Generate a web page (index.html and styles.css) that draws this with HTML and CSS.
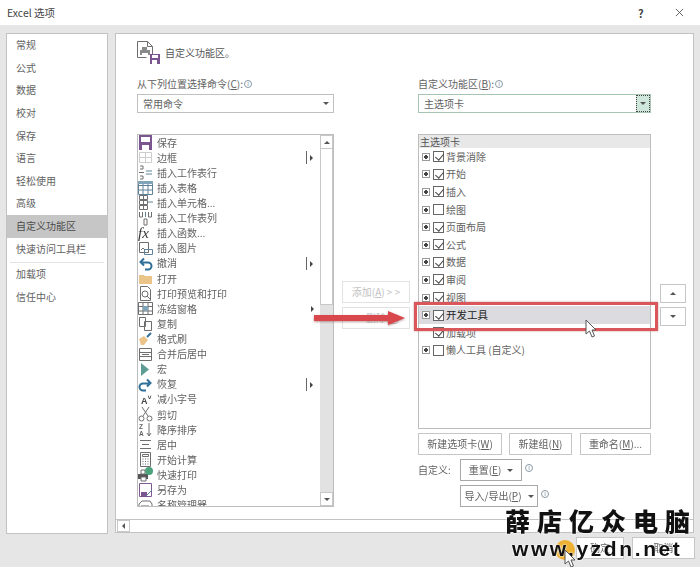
FILE: index.html
```html
<!DOCTYPE html>
<html lang="zh-CN">
<head>
<meta charset="utf-8">
<title>Excel 选项</title>
<link rel="stylesheet" href="styles.css">
</head>
<body>
<div class="dialog">
  <header class="titlebar">
    <span class="title">Excel 选项</span>
    <span class="help">?</span>
    <svg class="close" viewBox="0 0 10 10"><path d="M1 1l8 8M9 1l-8 8"/></svg>
  </header>
  <div class="workspace">
    <nav class="sidebar">
      <div class="nav-item">常规</div>
      <div class="nav-item">公式</div>
      <div class="nav-item">数据</div>
      <div class="nav-item">校对</div>
      <div class="nav-item">保存</div>
      <div class="nav-item">语言</div>
      <div class="nav-item">轻松使用</div>
      <div class="nav-item">高级</div>
      <div class="nav-item selected">自定义功能区</div>
      <div class="nav-item">快速访问工具栏</div>
      <div class="nav-divider"></div>
      <div class="nav-item">加载项</div>
      <div class="nav-item">信任中心</div>
    </nav>
    <main class="panel">
      <div class="panel-body">
        <div class="panel-head">
          <svg class="head-icon" viewBox="0 0 23 23">
            <path class="ln" d="M.5.5h10l5 5v11M.5.5v16h9M10.5.5v5h5"/>
            <path class="fl-grey" d="M5 6h5v3H5zM3 9h10v5H3z"/>
            <path class="fl-white" d="M5 12h6v4H5z"/>
            <path class="fl-purple" d="M13 13h10v10H13z"/>
            <path class="fl-white" d="M15 14h6v3h-6zM15 19h5v4h-5z"/>
          </svg>
          <span class="head-text">自定义功能区。</span>
        </div>
        <div class="columns">
          <section class="col-left">
            <div class="field-label">从下列位置选择命令(<u>C</u>):<span class="info">i</span></div>
            <div class="select"><span class="select-text">常用命令</span><span class="select-arrow"><i class="tri-down"></i></span></div>
            <div class="command-list">
              <div class="commands">
                <div class="cmd"><svg viewBox="0 0 15 15"><path class="fl-purple" d="M1 0h13v15H1z"/><path class="fl-white" d="M3 2h9v5H3zM4 10h7v5H4z"/></svg><span>保存</span></div>
                <div class="cmd"><svg viewBox="0 0 15 15"><path class="ln-soft" d="M1.500 2.500h12v10h-12zM1.500 7.500h12M7.500 2.500v10"/></svg><span>边框</span><i class="split"></i></div>
                <div class="cmd"><svg viewBox="0 0 15 15"><path class="ln" d="M2 1h3v3H2M2 11h3v3H2M1 7.500h5"/><path class="ln-blue" d="M8 6h6M8 9h6"/></svg><span>插入工作表行</span></div>
                <div class="cmd"><svg viewBox="0 0 15 15"><path class="ln-blue" d="M.5 1.500h14v13H.5zM.5 5.500h14M.5 10h14M5 1.500v13M10 1.500v13"/><path class="fl-blue" d="M0 1h15v3H0z"/></svg><span>插入表格</span></div>
                <div class="cmd"><svg viewBox="0 0 15 15"><path class="ln" d="M1.500.5h8v4h-8zM5.500.5v4M1.500 5.500h8v4h-8zM5.500 5.500v4M1.500 10.500h8v4h-8zM5.500 10.500v4"/><path class="ln-blue" d="M10 7h5"/></svg><span>插入单元格...</span></div>
                <div class="cmd"><svg viewBox="0 0 15 15"><path class="ln" d="M1.500 1v5h3V1M10.500 1v5h3V1M6 8h3v6H6z"/><path class="ln-blue" d="M7.500 1v5"/></svg><span>插入工作表列</span></div>
                <div class="cmd"><span class="fx">fx</span><span>插入函数...</span></div>
                <div class="cmd"><svg viewBox="0 0 15 15"><path class="ln" d="M1.500 1.500h9v10h-9z"/><path class="ln-blue" d="M6.500 8.500h8v5h-8z"/><path class="ln" d="M3 9l2-2 2 2"/></svg><span>插入图片</span></div>
                <div class="cmd"><svg viewBox="0 0 15 15"><path class="arc" d="M4 6.500h6a3.500 3.500 0 0 1 0 7H7M6 2.500L2.500 6 6 9.500"/></svg><span>撤消</span><i class="split"></i></div>
                <div class="cmd"><svg viewBox="0 0 15 15"><path class="fl-folder" d="M1 4h5l1 1h7v8H1z"/></svg><span>打开</span></div>
                <div class="cmd"><svg viewBox="0 0 15 15"><path class="ln" d="M2.500.5h7l3 3v11h-10z"/><circle class="ln" cx="7" cy="8" r="3"/><path class="ln" d="M9 10l4 4"/></svg><span>打印预览和打印</span></div>
                <div class="cmd"><svg viewBox="0 0 15 15"><path class="ln" d="M.5 1.500h14v12H.5zM.5 5.500h14M.5 10h14M5 1.500v12M10 1.500v12"/><path class="fl-blue" d="M5 5h5v5H5z"/></svg><span>冻结窗格</span><i class="tri-right solo"></i></div>
                <div class="cmd"><svg viewBox="0 0 15 15"><path class="ln" d="M1.500 1.500h6v9h-6zM6.500 5.500h7v9h-7z"/></svg><span>复制</span></div>
                <div class="cmd"><svg viewBox="0 0 15 15"><path class="fl-folder" d="M1 8l5-3 4 4-4 5H3z"/><path class="arc" d="M9 6l4-4"/></svg><span>格式刷</span></div>
                <div class="cmd"><svg viewBox="0 0 15 15"><path class="ln" d="M1.500 1.500h12v12h-12zM1.500 5.500h12M1.500 9.500h12M4 7.500h7"/></svg><span>合并后居中</span></div>
                <div class="cmd"><svg viewBox="0 0 15 15"><path class="fl-teal" d="M3 1l8 6.500L3 14z"/></svg><span>宏</span></div>
                <div class="cmd"><svg viewBox="0 0 15 15"><path class="arc" d="M11 6.500H5a3.500 3.500 0 0 0 0 7h3M9 2.500L12.500 6 9 9.500"/></svg><span>恢复</span><i class="split"></i></div>
                <div class="cmd"><span class="font-a">A<small>˅</small></span><span>减小字号</span></div>
                <div class="cmd"><svg viewBox="0 0 15 15"><path class="ln" d="M4 0l6 9M11 0L5 9"/><circle class="ln" cx="3.500" cy="11.500" r="2.500"/><circle class="ln" cx="11.500" cy="11.500" r="2.500"/></svg><span>剪切</span></div>
                <div class="cmd"><span class="sort-letters">Z<br>A</span><svg class="sort-arrow" viewBox="0 0 6 15"><path class="ln" d="M3 1v13M1 11l2 3 2-3"/></svg><span>降序排序</span></div>
                <div class="cmd"><svg viewBox="0 0 15 15"><path class="ln" d="M2 3.500h11M4 7.500h7M2 11.500h11"/></svg><span>居中</span></div>
                <div class="cmd"><svg viewBox="0 0 15 15"><path class="ln" d="M2.500.5h10v14h-10zM4.500 2.500h6v2h-6zM4.500 7h1M7 7h1M9.500 7h1M4.500 9.500h1M7 9.500h1M9.500 9.500h1M4.500 12h1M7 12h1M9.500 12h1"/></svg><span>开始计算</span></div>
                <div class="cmd"><svg viewBox="0 0 15 15"><path class="fl-dark" d="M0 7h10v5H0z"/><path class="fl-white" d="M3 10h5v4H3z"/><path class="ln" d="M3 10h5v4H3zM3 3h4v4H3z"/><circle class="fl-green" cx="11" cy="4" r="4"/></svg><span>快速打印</span></div>
                <div class="cmd"><svg viewBox="0 0 15 15"><path class="ln-purple" d="M1.500 .5h12v13h-12z"/><path class="fl-purple" d="M3 9h6v5H3z"/><path class="ln-blue" d="M8 13l6-6"/></svg><span>另存为</span></div>
                <div class="cmd"><svg viewBox="0 0 15 15"><path class="ln" d="M1 6l3-3h8l2 3v7H1zM3 8h8"/></svg><span>名称管理器</span></div>
              </div>
              <div class="vscroll">
                <div class="scroll-btn"><i class="tri-up"></i></div>
                <div class="scroll-thumb"></div>
                <div class="scroll-track"></div>
                <div class="scroll-btn"><i class="tri-down"></i></div>
              </div>
            </div>
          </section>
          <section class="col-mid">
            <div class="btn mid-btn disabled"><span>添加(<u>A</u>) &gt; &gt;</span></div>
            <div class="btn mid-btn disabled"><span>&lt;&lt; 删除(<u>R</u>)</span></div>
          </section>
          <section class="col-right">
            <div class="field-label">自定义功能区(<u>B</u>):<span class="info">i</span></div>
            <div class="select focus"><span class="select-text">主选项卡</span><span class="select-arrow active"><i class="tri-down"></i></span></div>
            <div class="tree">
              <div class="tree-head">主选项卡</div>
              <div class="tree-row"><i class="exp"></i><i class="chk on"></i><span>背景消除</span></div>
              <div class="tree-row"><i class="exp"></i><i class="chk on"></i><span>开始</span></div>
              <div class="tree-row"><i class="exp"></i><i class="chk on"></i><span>插入</span></div>
              <div class="tree-row"><i class="exp"></i><i class="chk"></i><span>绘图</span></div>
              <div class="tree-row"><i class="exp"></i><i class="chk on"></i><span>页面布局</span></div>
              <div class="tree-row"><i class="exp"></i><i class="chk on"></i><span>公式</span></div>
              <div class="tree-row"><i class="exp"></i><i class="chk on"></i><span>数据</span></div>
              <div class="tree-row"><i class="exp"></i><i class="chk on"></i><span>审阅</span></div>
              <div class="tree-row"><i class="exp"></i><i class="chk on"></i><span>视图</span></div>
              <div class="tree-row current"><i class="exp"></i><i class="chk on"></i><span>开发工具</span></div>
              <div class="tree-row"><i class="exp ghost"></i><i class="chk on"></i><span>加载项</span></div>
              <div class="tree-row"><i class="exp"></i><i class="chk"></i><span>懒人工具 (自定义)</span></div>
            </div>
            <div class="tree-actions">
              <div class="btn action w84"><span>新建选项卡(<u>W</u>)</span></div>
              <div class="btn action w63"><span>新建组(<u>N</u>)</span></div>
              <div class="btn action w71"><span>重命名(<u>M</u>)...</span></div>
            </div>
            <div class="custom-row">
              <span class="custom-label">自定义:</span>
              <div class="btn drop w62"><span>重置(<u>E</u>)</span><i class="tri-down"></i></div>
              <span class="info">i</span>
            </div>
            <div class="custom-row second">
              <div class="btn drop w78"><span>导入/导出(<u>P</u>)</span><i class="tri-down"></i></div>
              <span class="info">i</span>
            </div>
          </section>
          <section class="col-far">
            <div class="btn move"><i class="tri-up"></i></div>
            <div class="btn move"><i class="tri-down"></i></div>
          </section>
        </div>
      </div>
      <div class="hscroll">
        <div class="scroll-btn wide"><i class="tri-left"></i></div>
      </div>
    </main>
  </div>
  <footer class="footer">
    <div class="btn foot-btn ok">确定</div>
    <div class="btn foot-btn cancel">取消</div>
  </footer>
</div>

<svg class="red-arrow" viewBox="0 0 92 16"><path d="M0 4h74V0l17 7-17 7v-4H0z"/></svg>
<div class="red-box"></div>
<svg class="cursor cursor-mid" viewBox="0 0 12 19"><path d="M1 1v14l3.500-3 2.500 6 2.500-1-2.500-6H11z"/></svg>
<div class="click-dot"></div>
<svg class="cursor cursor-ok" viewBox="0 0 12 19"><path d="M1 1v14l3.500-3 2.500 6 2.500-1-2.500-6H11z"/></svg>
<div class="watermark">
  <div class="wm-cn">薛店亿众电脑</div>
  <div class="wm-en">www.yzdn.net</div>
</div>
</body>
</html>
```
FILE: styles.css
```css
* { box-sizing: border-box; }
html, body { margin: 0; padding: 0; }
body {
  position: relative;
  width: 700px;
  height: 567px;
  overflow: hidden;
  background: #e6e6e6;
  color: #626262;
  font-family: "Noto Sans CJK SC", "Liberation Sans", sans-serif;
  font-size: 10px;
  line-height: 14px;
}
.dialog { display: flex; flex-direction: column; height: 567px; filter: blur(.35px); }
u { text-underline-offset: 1px; }

.titlebar { display: flex; align-items: center; height: 25px; padding: 0 7px; background: #fff; flex: none; }
.title { flex: 1; font-size: 10.500px; color: #444; }
.help { width: 8px; margin-right: 29px; font-size: 11px; color: #444; font-weight: 700; }
.close { width: 9px; height: 9px; margin-right: 9px; }
.close path { stroke: #555; stroke-width: 1; fill: none; }

.workspace { display: flex; height: 509px; padding: 8px 6px 0; flex: none; }
.sidebar { width: 102px; height: 501px; background: #fff; border: 1px solid #c2c2c2; flex: none; }
.nav-item { height: 22.650px; padding-left: 9px; line-height: 22px; white-space: nowrap; }
.nav-item.selected { background: #c6c6c6; color: #4a4a4a; }
.nav-divider { height: 1px; margin: 2px 3px 0; background: #e2e2e2; }

.panel { display: flex; flex-direction: column; width: 579px; height: 500px; margin-left: 7px; background: #fff; border: 1px solid #c2c2c2; flex: none; }
.panel-body { flex: 1; padding: 7px 0 0 21px; min-height: 0; }
.panel-head { display: flex; align-items: center; height: 23px; }
.head-icon { width: 23px; height: 23px; }
.head-text { margin: 0 0 0 5px; padding-top: 1px; color: #555; }

.columns { display: flex; margin-top: 13px; }
.col-left { width: 197px; flex: none; }
.col-mid { width: 84px; padding: 204px 0 0 8px; flex: none; }
.col-right { width: 233px; flex: none; }
.col-far { width: 35px; padding: 207px 0 0 9px; flex: none; }

.field-label { height: 14px; line-height: 14px; white-space: nowrap; }
.info { display: inline-block; width: 8px; height: 8px; margin-left: 1px; border: 1px solid #8a9aa5; border-radius: 50%; color: #7b8a95; font-size: 6px; line-height: 6px; text-align: center; vertical-align: 2px; }

.select { display: flex; align-items: stretch; height: 19px; margin-top: 3px; background: #fff; border: 1px solid #c0c0c0; }
.select-text { flex: 1; padding-left: 5px; line-height: 17px; }
.select-arrow { display: flex; align-items: center; justify-content: center; width: 14px; }
.select.focus { border-color: #a5c4b4; }
.select-arrow.active { background: #cfe7db; border: 1px dotted #444; }

.tri-down, .tri-up, .tri-right, .tri-left { display: block; width: 0; height: 0; border-style: solid; border-color: transparent; }
.tri-down { border-width: 3px 3px 0; border-top-color: #555; }
.tri-up { border-width: 0 3px 3px; border-bottom-color: #555; }
.tri-right { border-width: 3px 0 3px 3px; border-left-color: #444; }
.tri-left { border-width: 3px 3px 3px 0; border-right-color: #555; }

.command-list { display: flex; height: 373px; margin-top: 21px; background: #fff; border: 1px solid #bdbdbd; }
.commands { flex: 1; min-width: 0; overflow: hidden; }
.cmd { position: relative; display: flex; align-items: center; height: 15.120px; white-space: nowrap; }
.cmd svg { width: 15px; height: 15px; margin-right: 4px; flex: none; }
.fx { width: 19px; font: italic 15px/15px "Liberation Serif", serif; color: #333; }
.font-a { width: 19px; padding-left: 3px; font: 700 9px/15px "Liberation Sans", sans-serif; color: #444; }
.font-a small { font-size: 7px; vertical-align: 4px; }
.sort-letters { width: 8px; padding-left: 1px; font: 700 6.500px/7px "Liberation Sans", sans-serif; color: #666; }
.cmd .sort-arrow { width: 6px; margin-right: 5px; }
.split { position: absolute; left: 168px; top: 1px; width: 8px; height: 13px; border-left: 1px solid #666; }
.split::after { content: ""; position: absolute; left: 3px; top: 4px; border: 3px solid transparent; border-left-color: #444; border-right-width: 0; }
.solo { position: absolute; left: 173px; top: 5px; }

.ln, .ln-soft, .ln-blue, .ln-purple, .arc { fill: none; stroke-width: 1; }
.ln { stroke: #6e6e6e; }
.ln-soft { stroke: #cdcdcd; }
.ln-blue { stroke: #5d8299; }
.ln-purple { stroke: #7d5b92; }
.arc { stroke: #2f6f98; stroke-width: 2; }
.fl-grey { fill: #8a8a8a; }
.fl-white { fill: #fff; }
.fl-purple { fill: #7a5590; }
.fl-blue { fill: #7fa3b8; }
.fl-folder { fill: #eac488; }
.fl-teal { fill: #5f9c96; }
.fl-dark { fill: #555; }
.fl-green { fill: #4aa37b; }

.vscroll { display: flex; flex-direction: column; width: 13px; flex: none; background: #e2e2e2; }
.scroll-btn { display: flex; align-items: center; justify-content: center; width: 13px; height: 14px; background: #fff; border: 1px solid #c8c8c8; flex: none; }
.scroll-btn.wide { height: 100%; }
.scroll-thumb { height: 156px; background: #fff; border: 1px solid #c8c8c8; border-top: 0; flex: none; }
.scroll-track { flex: 1; }

.btn { display: flex; align-items: center; justify-content: center; background: #fff; border: 1px solid #c6c6c6; white-space: nowrap; flex: none; }
.mid-btn { width: 68px; height: 22px; margin-bottom: 4px; }
.disabled { color: #c2c2c2; border-color: #e2e2e2; }
.move { width: 26px; height: 19px; margin-bottom: 4px; }

.tree { height: 295px; margin-top: 21px; background: #fff; border: 1px solid #bdbdbd; overflow: hidden; }
.tree-head { height: 13px; padding-left: 1px; line-height: 13px; background: #e8e8e8; color: #555; }
.tree-row { display: flex; align-items: center; height: 17.600px; padding-left: 3px; }
.tree-row.current { background: #dcdce0; color: #222; font-size: 10.500px; }
.exp { width: 8px; height: 8px; margin-right: 3px; border: 1px solid #9a9a9a; flex: none;
  background: linear-gradient(#444, #444) center / 4px 2px no-repeat, linear-gradient(#444, #444) center / 2px 4px no-repeat, #fff; }
.exp.ghost { visibility: hidden; }
.chk { position: relative; width: 11px; height: 11px; margin-right: 2px; border: 1px solid #666; background: #fff; flex: none; }
.chk.on::after { content: ""; position: absolute; left: 3px; top: 0; width: 4px; height: 7px; border: solid #444; border-width: 0 1px 1px 0; transform: rotate(40deg); }

.tree-actions { display: flex; gap: 7px; margin-top: 4px; }
.action { height: 22px; }
.w84 { width: 84px; }
.w63 { width: 63px; }
.w71 { width: 71px; margin-left: 1px; }
.w62 { width: 62px; }
.w78 { width: 78px; }
.custom-row { display: flex; align-items: flex-start; margin-top: 4px; }
.custom-row.second { padding-left: 42px; }
.custom-label { width: 42px; padding-top: 4px; }
.drop { height: 22px; border: 1px solid #a8a8a8; gap: 6px; }
.custom-row .info { margin: 5px 0 0 3px; }

.hscroll { display: flex; height: 13px; padding-left: 1px; border-top: 1px solid #c2c2c2; flex: none; }

.footer { display: flex; justify-content: flex-end; gap: 8px; padding: 3px 5px 0 0; flex: 1; }
.foot-btn { height: 22px; }
.ok { width: 48px; }
.cancel { width: 63px; }

.red-arrow { position: absolute; left: 314px; top: 311px; width: 92px; height: 16px; filter: drop-shadow(0 1px 1px rgba(120, 60, 60, .5)); }
.red-arrow path { fill: #d9484c; }
.red-box { position: absolute; left: 414px; top: 302px; width: 244px; height: 29px; border: 3px solid #d9575a; box-shadow: 0 0 2px rgba(150, 60, 60, .5); }
.cursor { position: absolute; width: 12px; height: 19px; }
.cursor path { fill: #fff; stroke: #555; stroke-width: 1; }
.cursor-mid { left: 585px; top: 319px; }
.cursor-ok { left: 564px; top: 549px; z-index: 2; }
.click-dot { position: absolute; left: 555px; top: 540px; width: 20px; height: 20px; border-radius: 50%; background: #eeb030; }
.watermark { position: absolute; left: 500px; top: 504px; width: 200px; color: #111; text-shadow: 0 0 2px #fff, 0 0 2px #fff; z-index: 1; }
.wm-cn { height: 33px; padding-left: 5px; font: 900 25px/33px "Noto Sans CJK SC", sans-serif; letter-spacing: 7px; white-space: nowrap; }
.wm-en { padding-left: 12px; font: 700 21px/24px "Liberation Sans", sans-serif; letter-spacing: 2.600px; white-space: nowrap; }
```
